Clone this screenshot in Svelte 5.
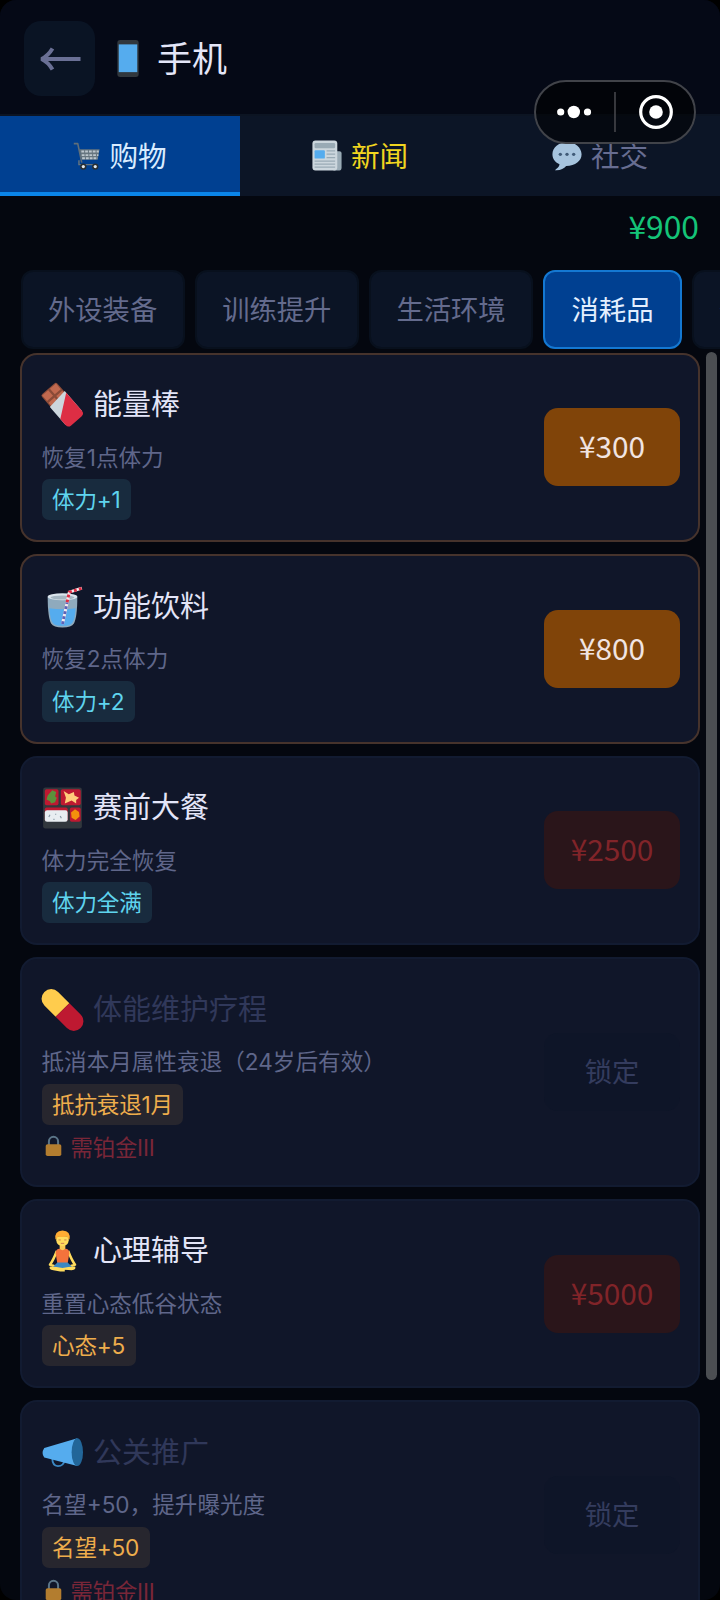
<script>
    let activeTab = "shop";
    let activeCategory = "consume";

    const money = 900;

    const tabs = [
        { id: "shop", name: "购物", icon: "cart" },
        { id: "news", name: "新闻", icon: "news" },
        { id: "social", name: "社交", icon: "chat" }
    ];

    const categories = [
        { id: "gear", name: "外设装备" },
        { id: "train", name: "训练提升" },
        { id: "life", name: "生活环境" },
        { id: "consume", name: "消耗品" },
        { id: "rest", name: "休闲娱乐" }
    ];

    const items = [
        { icon: "bar", name: "能量棒", desc: "恢复1点体力", tag: "体力+1", kind: "energy", price: 300, state: "ready" },
        { icon: "drink", name: "功能饮料", desc: "恢复2点体力", tag: "体力+2", kind: "energy", price: 800, state: "ready" },
        { icon: "bento", name: "赛前大餐", desc: "体力完全恢复", tag: "体力全满", kind: "energy", price: 2500, state: "poor" },
        { icon: "pill", name: "体能维护疗程", desc: "抵消本月属性衰退（24岁后有效）", tag: "抵抗衰退1月", kind: "bonus", state: "locked", need: "需铂金III" },
        { icon: "yoga", name: "心理辅导", desc: "重置心态低谷状态", tag: "心态+5", kind: "bonus", price: 5000, state: "poor" },
        { icon: "horn", name: "公关推广", desc: "名望+50，提升曝光度", tag: "名望+50", kind: "bonus", state: "locked", need: "需铂金III" }
    ];
</script>

<div class="phone">
    <header>
        <button class="back" aria-label="back">
            <svg width="42" height="24" viewBox="0 0 42 24">
                <path d="M41.500 12H2M13.500 1.500Q9 9 2.500 12Q9 15 13.500 22.500" fill="none" stroke="#6a7095" stroke-width="4" stroke-linejoin="bevel" />
            </svg>
        </button>
        <svg class="phone-icon" width="22" height="37" viewBox="0 0 22 38">
            <rect width="22" height="38" rx="3" fill="#31373d" />
            <rect x="1.500" y="4.500" width="19" height="28.500" fill="#55acee" />
        </svg>
        <h1>手机</h1>
    </header>

    <nav>
        {#each tabs as tab}
            <button class="tab {tab.id}" class:active={tab.id === activeTab} on:click={() => (activeTab = tab.id)}>
                {#if tab.icon === "cart"}
                    <svg width="27" height="29" viewBox="0 0 34 36">
                        <path d="M1 3H6L11 27" fill="none" stroke="#5f6e79" stroke-width="2" stroke-linejoin="round" />
                        <path d="M8 10H33.500L31 23.500H11Z" fill="#66757f" />
                        <path d="M10.500 13H32.500M11 17.500H32M11.500 21.500H31" stroke="#bcc6cd" stroke-width="2.400" stroke-dasharray="3.500 1.300" />
                        <path d="M7.500 24V29.500H30" fill="none" stroke="#66757f" stroke-width="1.800" />
                        <circle cx="13" cy="32" r="4" fill="#292f33" /><circle cx="13" cy="32" r="2" fill="#e1e8ed" />
                        <circle cx="28" cy="32" r="4" fill="#292f33" /><circle cx="28" cy="32" r="2" fill="#e1e8ed" />
                    </svg>
                {:else if tab.icon === "news"}
                    <svg width="30" height="31" viewBox="0 0 35 36">
                        <path d="M28 13H32Q34.500 13 34.500 15V32Q34.500 35.500 32 35.500H25Z" fill="#99aab5" />
                        <rect x=".5" y=".5" width="29" height="35" rx="3.500" fill="#ccd6dd" />
                        <rect x="3" y="3.500" width="24" height="6" rx="1.500" fill="#99aab5" />
                        <rect x="3" y="12" width="12" height="9.500" rx="1" fill="#55acee" />
                        <path d="M17 12.500H27M17 16.500H27M17 20.500H27M3 24.500H27M3 28H27M3 31.500H27" stroke="#99aab5" stroke-width="1.500" />
                    </svg>
                {:else}
                    <svg width="30" height="30" viewBox="0 0 36 36">
                        <path d="M18 1.500C8 1.500 .5 7.500 .5 16C.5 22 4.500 26 9 28C9 31 6 33 3.500 35C10 35.500 14 33.500 17 30C28 30 35.500 24 35.500 16S28 1.500 18 1.500Z" fill="#a7c4de" />
                        <circle cx="10" cy="16" r="2" fill="#405b78" /><circle cx="18" cy="16" r="2" fill="#405b78" /><circle cx="26" cy="16" r="2" fill="#405b78" />
                    </svg>
                {/if}
                <span>{tab.name}</span>
            </button>
        {/each}
    </nav>

    <div class="money">¥{money}</div>

    <div class="categories">
        {#each categories as cat}
            <button class="chip" class:active={cat.id === activeCategory} on:click={() => (activeCategory = cat.id)}>{cat.name}</button>
        {/each}
    </div>

    <div class="list">
        {#each items as item}
            <div class="card {item.state}">
                <div class="info">
                    <div class="name">
                        <svg width="41" height="42" viewBox="0 0 36 36">
                            {#if item.icon === "bar"}
                                <g transform="rotate(-41 18 18)">
                                    <rect x="9" y="-1" width="18" height="21" rx="2" fill="#8a4b38" />
                                    <path d="M10 0H17V6.500H10ZM19 0H26V6.500H19ZM10 8.500H17V15H10ZM19 8.500H26V15H19Z" fill="#c1694f" />
                                    <path d="M8.500 12L27.500 10V33H8.500Z" fill="#ccd6dd" />
                                    <path d="M8.500 26L27.500 12V33Q27.500 36.500 24 36.500H12Q8.500 36.500 8.500 33Z" fill="#dd2e44" />
                                </g>
                            {:else if item.icon === "drink"}
                                <path d="M5 9Q5 27 8 32.500Q10 36 18 36T28 32.500Q31 27 31 9Z" fill="#8faabd" />
                                <path d="M6.500 19Q18 21 29.500 19Q29 29 26.500 32Q25 34.500 18 34.500T9.500 32Q7 29 6.500 19Z" fill="#55acee" />
                                <ellipse cx="18" cy="9" rx="13" ry="3" fill="#dbe5ed" />
                                <ellipse cx="18" cy="9.700" rx="10.500" ry="1.800" fill="#a5b6c2" />
                                <path d="M18 33L24 5L35 1.500" fill="none" stroke="#f5e9ed" stroke-width="2.600" />
                                <path d="M22 14L24 5L35 1.500" fill="none" stroke="#dd2e44" stroke-width="2.600" stroke-dasharray="2.500 2" />
                                <path d="M18 33L22 14" fill="none" stroke="#5c63b8" stroke-width="2.600" stroke-dasharray="2.500 2" />
                            {:else if item.icon === "bento"}
                                <rect x="1" y="0" width="34" height="36" rx="2" fill="#31373d" />
                                <rect x="2.500" y="1.500" width="12" height="14" rx="1.500" fill="#be1931" />
                                <rect x="16.500" y="1.500" width="17.500" height="14" rx="1.500" fill="#be1931" />
                                <path d="M9 2.500L5 7L4 10.500L7 12L8 14L11.500 13L13 9L11.500 8L12.500 4Z" fill="#5c913b" />
                                <path d="M19 3L23.500 6L28 4L28.500 7L32.500 9L30 11L30 14L26 11.500L20 14L21 9Z" fill="#ffcc7a" />
                                <rect x="2.500" y="17.500" width="20" height="12" rx="1.500" fill="#be1931" />
                                <rect x="2.500" y="20" width="20" height="10" rx="2" fill="#e8edf1" />
                                <path d="M6 26L7 24M12 23V24M17 27L16 25M10 28H11" stroke="#8899a6" />
                                <rect x="24.500" y="17.500" width="9.500" height="12.500" rx="1.500" fill="#be1931" />
                                <path d="M29 19L32.500 21.500L33 25.500L29.500 28.500L26 26.500L25.500 22Z" fill="#f4900c" />
                            {:else if item.icon === "pill"}
                                <g transform="rotate(-45 18 18)">
                                    <path d="M9.500 18V4A8.500 8.500 0 0 1 26.500 4V18Z" fill="#ffcc4d" />
                                    <path d="M9.500 18V32A8.500 8.500 0 0 0 26.500 32V18Z" fill="#be1931" />
                                </g>
                            {:else if item.icon === "yoga"}
                                <path d="M13 18Q10 26 7 30L13 32M23 18Q26 26 29 30L23 32" fill="none" stroke="#ffdc5d" stroke-width="2.200" stroke-linejoin="round" />
                                <path d="M15.500 12H20.500V18H15.500Z" fill="#f9ca55" />
                                <path d="M15.500 16Q18 18.500 20.500 16Q24 16 24 20L22.500 29H13.500L12 20Q12 16 15.500 16Z" fill="#f4733c" />
                                <path d="M13.500 28H22.500L27 32.500L18 35L9 32.500Z" fill="#3b88c3" />
                                <path d="M7 31.500Q13 31.500 18 33Q23 31.500 29 31.500Q30.500 34 26 35L20 34.500L20 36H16L10 35Q5.500 34 7 31.500Z" fill="#ffdc5d" />
                                <path d="M12.500 5H23.500V8.500Q23 13.500 18 13.500T12.500 8.500Z" fill="#ffdc5d" />
                                <path d="M11.800 8Q10.500 .5 18 0Q25.500 .5 24.200 8Q22.500 7 22 5Q17 6.500 14 5Q13.500 7 11.800 8Z" fill="#ffac33" />
                                <path d="M14.500 8.300H16.500M19.500 8.300H21.500M16.500 11.300H19.500" stroke="#c1694f" stroke-width=".7" />
                            {:else}
                                <path d="M9 22Q9 29.500 14 29.500Q19 29.500 20 24" fill="none" stroke="#3b88c3" stroke-width="1.600" />
                                <path d="M2 13.500L31 5V29.500L2 22Q-1 18 2 13.500Z" fill="#55acee" />
                                <ellipse cx="31" cy="17.300" rx="5" ry="12.200" fill="#226699" />
                            {/if}
                        </svg>
                        <span>{item.name}</span>
                    </div>
                    <div class="desc">{item.desc}</div>
                    <div class="tag {item.kind}">{item.tag}</div>
                    {#if item.need}
                        <div class="need">
                            <svg width="17" height="22" viewBox="0 0 18 24">
                                <path d="M4 11V7A5 5 0 0 1 14 7V11" fill="none" stroke="#5b7588" stroke-width="2.200" />
                                <rect x=".5" y="10" width="17" height="13" rx="2" fill="#b37d2f" />
                            </svg>
                            <span>{item.need}</span>
                        </div>
                    {/if}
                </div>
                <button class="buy">{item.state === "locked" ? "锁定" : `¥${item.price}`}</button>
            </div>
        {/each}
        <div class="scrollbar"></div>
    </div>

    <div class="capsule">
        <svg width="162" height="64" viewBox="0 0 162 64">
            <rect x="1" y="1" width="160" height="62" rx="31" fill="#000" fill-opacity=".55" stroke="#414349" stroke-width="2" />
            <circle cx="26.700" cy="32" r="3.600" fill="#fff" />
            <circle cx="39.800" cy="32" r="6.200" fill="#fff" />
            <circle cx="53.500" cy="32" r="3.600" fill="#fff" />
            <path d="M81 12V52" stroke="#45464b" stroke-width="1.600" />
            <circle cx="122" cy="32" r="15.300" fill="none" stroke="#fff" stroke-width="3.200" />
            <circle cx="122" cy="32" r="6.800" fill="#fff" />
        </svg>
    </div>
</div>

<style>
    :global(body) {
        background: #000;
    }

    .phone {
        position: relative;
        display: flex;
        flex-direction: column;
        box-sizing: border-box;
        width: 720px;
        height: 1600px;
        overflow: hidden;
        border-radius: 16px;
        background: #04070f;
        font-family: Inter, "Noto Sans CJK SC", sans-serif;
    }

    svg {
        display: block;
        flex: none;
        overflow: visible;
    }

    button {
        flex: none;
        box-sizing: border-box;
        margin: 0;
        padding: 0;
        border: none;
        font-family: inherit;
        white-space: nowrap;
    }

    header {
        display: flex;
        align-items: center;
        flex: none;
        box-sizing: border-box;
        height: 116px;
        padding: 0 24px;
        border-bottom: 2px solid #0c1422;
        background: #050916;
    }

    .back {
        display: flex;
        align-items: center;
        justify-content: center;
        width: 71px;
        height: 75px;
        margin-top: 3px;
        border-radius: 17px;
        background: #0a1424;
    }

    .phone-icon {
        margin: 3px 18px 0 22px;
    }

    h1 {
        margin: 3px 0 0;
        color: #e4e6f8;
        font-size: 35px;
        line-height: 50px;
        font-weight: 400;
    }

    nav {
        display: flex;
        flex: none;
        height: 80px;
        background: #0c1526;
    }

    .tab {
        display: flex;
        align-items: center;
        justify-content: center;
        gap: 9px;
        width: 240px;
        padding-top: 1px;
        border-bottom: 4px solid transparent;
        background: none;
        color: #676d91;
        font-size: 28.6px;
    }

    .tab svg {
        margin-top: 2px;
    }

    .tab.news {
        color: #f1d51f;
    }

    .tab.active {
        border-color: #0a85e9;
        background: #004091;
        color: #d9ecff;
    }

    .money {
        flex: none;
        height: 74px;
        padding-right: 21px;
        color: #14c478;
        font-family: "Noto Sans CJK SC", sans-serif;
        font-size: 31.8px;
        line-height: 59px;
        text-align: right;
    }

    .categories {
        display: flex;
        gap: 10px;
        flex: none;
        height: 79px;
        padding-left: 20.5px;
    }

    .chip {
        height: 79px;
        padding: 0 25.5px 3px;
        border: 2px solid #08101d;
        border-radius: 12px;
        background: #0b1425;
        color: #646b8d;
        font-size: 27.3px;
    }

    .chip.active {
        padding: 0 26.5px 3px;
        border-color: #1478d2;
        background: #004091;
        color: #e3efff;
    }

    .list {
        position: relative;
        display: flex;
        flex-direction: column;
        gap: 12px;
        flex: 1;
        min-height: 0;
        padding: 3.5px 20px 0;
    }

    .card {
        display: flex;
        align-items: center;
        justify-content: space-between;
        flex: none;
        box-sizing: border-box;
        padding: 20px 18px 20px 19.5px;
        border: 2px solid #121b31;
        border-radius: 17px;
        background: #101629;
    }

    .card.ready {
        border-color: #46332c;
    }

    .name {
        display: flex;
        align-items: center;
        gap: 10.5px;
        height: 61px;
        color: #e3e5f8;
        font-size: 29px;
        line-height: 42px;
    }

    .locked .name {
        color: #30385a;
    }

    .desc {
        height: 43.6px;
        color: #5f668a;
        font-size: 22.6px;
        line-height: 43px;
    }

    .tag {
        width: fit-content;
        height: 41px;
        padding: 0 10.5px;
        border-radius: 7px;
        font-size: 22.6px;
        line-height: 41px;
        letter-spacing: -0.2px;
    }

    .tag.energy {
        background: #182b3e;
        color: #5fd4ee;
    }

    .tag.bonus {
        background: #27262e;
        color: #eead4c;
    }

    .need {
        display: flex;
        align-items: center;
        gap: 9px;
        box-sizing: border-box;
        height: 40px;
        padding: 3px 0 0 3px;
        color: #792638;
        font-size: 22.4px;
        letter-spacing: -0.2px;
    }

    .buy {
        width: 136px;
        height: 78px;
        padding-bottom: 4px;
        border-radius: 14px;
        background: #804409;
        color: #f1e4e2;
        font-family: "Noto Sans CJK SC", sans-serif;
        font-size: 29.8px;
    }

    .poor .buy {
        background: #2a151a;
        color: #812429;
    }

    .locked .buy {
        background: #0e1528;
        color: #343c5e;
        font-size: 27.3px;
    }

    .scrollbar {
        position: absolute;
        top: 3px;
        right: 3px;
        width: 11px;
        height: 1028px;
        border-radius: 6px;
        background: #4b4e52;
    }

    .capsule {
        position: absolute;
        top: 80px;
        left: 534px;
    }
</style>
